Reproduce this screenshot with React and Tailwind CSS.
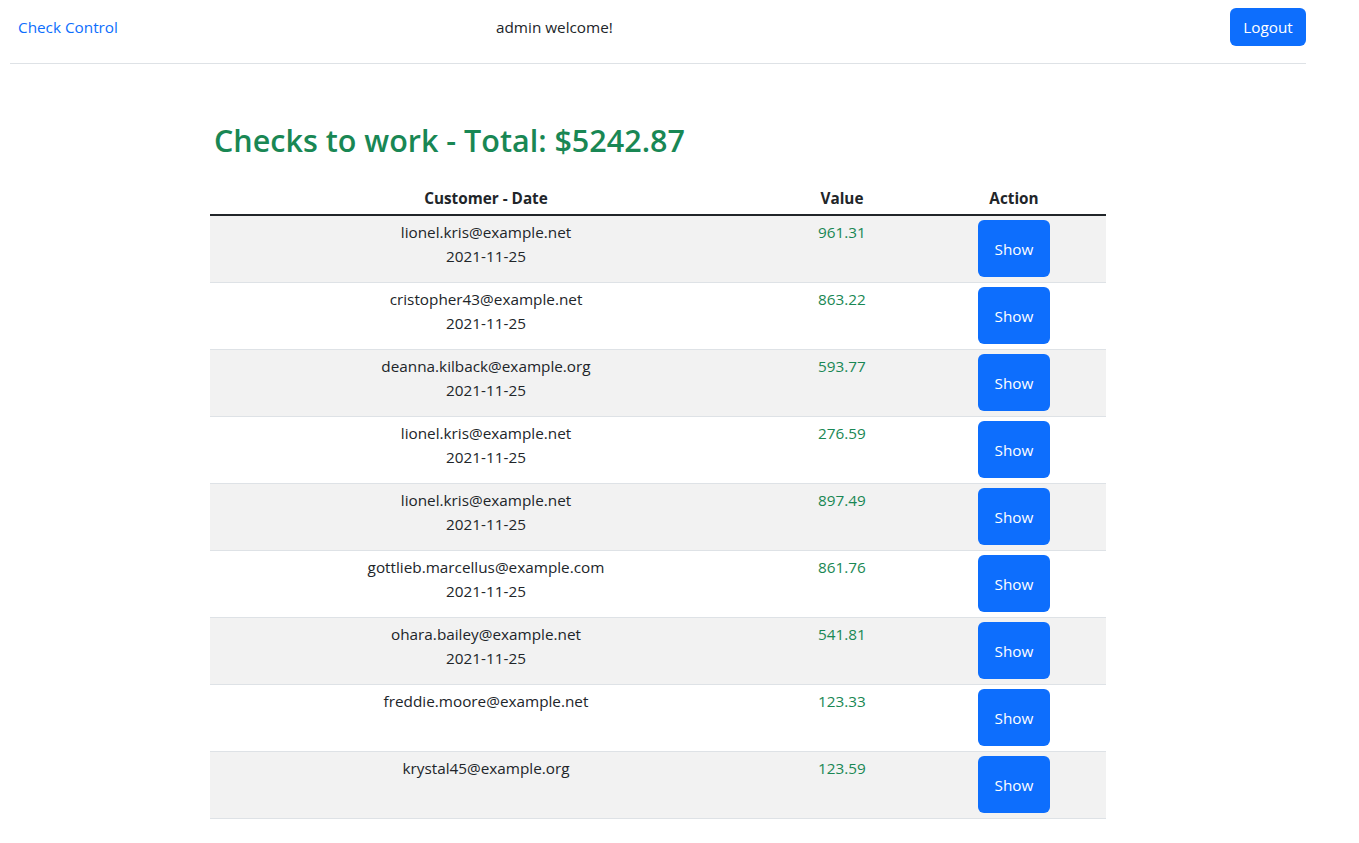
import React from "react";

const rows = [
  ["lionel.kris@example.net", "2021-11-25", "961.31"],
  ["cristopher43@example.net", "2021-11-25", "863.22"],
  ["deanna.kilback@example.org", "2021-11-25", "593.77"],
  ["lionel.kris@example.net", "2021-11-25", "276.59"],
  ["lionel.kris@example.net", "2021-11-25", "897.49"],
  ["gottlieb.marcellus@example.com", "2021-11-25", "861.76"],
  ["ohara.bailey@example.net", "2021-11-25", "541.81"],
  ["freddie.moore@example.net", "", "123.33"],
  ["krystal45@example.org", "", "123.59"],
];

export default function App() {
  return (
    <div className="min-h-[843px] bg-white text-[#212529] text-[15.3px] leading-[24px] font-['Open_Sans',sans-serif]">
      <nav className="ml-[10px] w-[1296px] h-[64px] pt-[8px] border-b border-[#dee2e6]">
        <div className="h-[38px] flex items-center">
          <div className="w-[8px]" />
          <a className="text-[#0d6efd] w-[478px]" href="#">Check Control</a>
          <span className="text-[#212529]">admin welcome!</span>
          <div className="flex-1" />
          <button className="bg-[#0d6efd] text-white rounded-[6px] w-[76px] h-[38px]">Logout</button>
        </div>
      </nav>
      <div className="ml-[210px] w-[896px]">
        <h2 className="mt-[57px] pl-[4px] text-[30.5px] leading-[38px] font-semibold text-[#198754]">
          Checks to work - Total: $5242.87
        </h2>
        <table className="mt-[23px] w-[896px] border-collapse table-fixed">
          <thead>
            <tr className="border-b-2 border-[#212529]">
              <th className="w-[552px] py-[4px] font-bold text-center">Customer - Date</th>
              <th className="w-[160px] py-[4px] font-bold text-center">Value</th>
              <th className="w-[184px] py-[4px] font-bold text-center">Action</th>
            </tr>
          </thead>
          <tbody>
            {rows.map((r, i) => (
              <tr key={i} className={"border-b border-[#dee2e6] " + (i % 2 === 0 ? "bg-[#f2f2f2]" : "bg-white")}>
                <td className="align-top text-center py-[4px]">
                  <div>{r[0]}</div>
                  {r[1] && <div>{r[1]}</div>}
                </td>
                <td className="align-top text-center py-[4px] text-[#198754]">{r[2]}</td>
                <td className="align-top text-center pt-[4px] pb-[5px]">
                  <button className="block mx-auto bg-[#0d6efd] text-white rounded-[6px] w-[72px] h-[57px]">Show</button>
                </td>
              </tr>
            ))}
          </tbody>
        </table>
      </div>
    </div>
  );
}
